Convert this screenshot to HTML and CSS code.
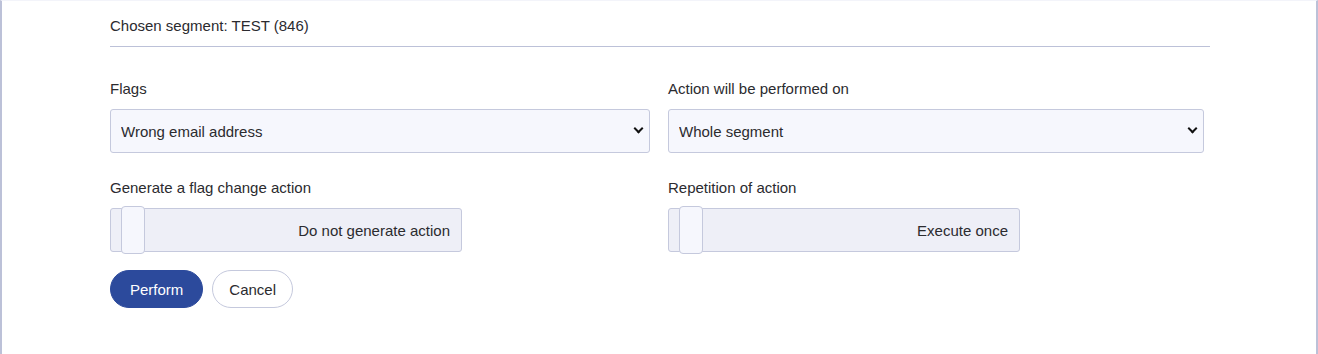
FILE: index.html
```html
<!DOCTYPE html>
<html lang="en">
<head>
  <meta charset="UTF-8">
  <title>Segment flags</title>
  <link rel="stylesheet" href="styles.css">
</head>
<body>

  <div class="panel">
    <div class="content">
      <h3 class="segment-title">Chosen segment: TEST (846)</h3>

      <form class="flag-form">
        <div class="grid">
          <div class="field">
            <label>Flags</label>
            <div class="select-wrap">
              <select>
                <option>Wrong email address</option>
              </select>
            </div>
          </div>
          <div class="field">
            <label>Action will be performed on</label>
            <div class="select-wrap">
              <select>
                <option>Whole segment</option>
              </select>
            </div>
          </div>

          <div class="field">
            <label>Generate a flag change action</label>
            <div class="toggle">
              <span class="knob"></span>
              <span class="toggle-text">Do not generate action</span>
            </div>
          </div>
          <div class="field">
            <label>Repetition of action</label>
            <div class="toggle">
              <span class="knob"></span>
              <span class="toggle-text">Execute once</span>
            </div>
          </div>
        </div>

        <div class="buttons">
          <button type="button" class="btn btn-primary">Perform</button>
          <button type="button" class="btn btn-light">Cancel</button>
        </div>
      </form>
    </div>
  </div>

</body>
</html>
```

FILE: styles.css
```css
body {
  margin: 0;
  font-family: "Liberation Sans", Arial, sans-serif;
  font-size: 15px;
  color: #2b2b2f;
  background: #ffffff;
}

.panel {
  height: 354px;
  box-sizing: border-box;
  border-left: 2px solid #bcc1d8;
  border-right: 2px solid #bcc1d8;
  border-top: 1px solid #f3f4fa;
}

.content {
  width: 1100px;
  margin-left: 108px;
}

.segment-title {
  margin: 0;
  padding: 16px 0 12px;
  font-size: 15px;
  font-weight: normal;
  border-bottom: 1px solid #bcc1d8;
}

.grid {
  display: grid;
  grid-template-columns: 540px 536px;
  column-gap: 18px;
  row-gap: 26px;
  margin-top: 33px;
}

.field label {
  display: block;
  margin-bottom: 12px;
}

.select-wrap {
  position: relative;
}

.select-wrap::after {
  content: "";
  position: absolute;
  right: 8px;
  top: 16px;
  width: 5px;
  height: 5px;
  border-right: 2px solid #111;
  border-bottom: 2px solid #111;
  transform: rotate(45deg);
  pointer-events: none;
}

select {
  appearance: none;
  width: 100%;
  height: 44px;
  padding: 0 10px;
  font-family: inherit;
  font-size: 15px;
  color: #2b2b2f;
  background: #f6f7fd;
  border: 1px solid #c5c9dd;
  border-radius: 3px;
}

.toggle {
  position: relative;
  width: 352px;
  height: 44px;
  box-sizing: border-box;
  background: #eeeff7;
  border: 1px solid #c5c9dd;
  border-radius: 3px;
  display: flex;
  align-items: center;
  justify-content: flex-end;
  padding-right: 11px;
}

.knob {
  position: absolute;
  left: 10px;
  top: -3px;
  width: 22px;
  height: 46px;
  background: #f6f7fd;
  border: 1px solid #c5c9dd;
  border-radius: 4px;
}

.buttons {
  display: flex;
  gap: 9px;
  margin-top: 18px;
}

.btn {
  height: 38px;
  padding: 0 16px;
  font-family: inherit;
  font-size: 15px;
  border-radius: 19px;
  cursor: pointer;
}

.btn-primary {
  padding: 0 19px;
  background: #2c4a9c;
  color: #ffffff;
  border: 1px solid #2c4a9c;
}

.btn-light {
  background: #ffffff;
  color: #2b2b2f;
  border: 1px solid #c5c9dd;
}
```
